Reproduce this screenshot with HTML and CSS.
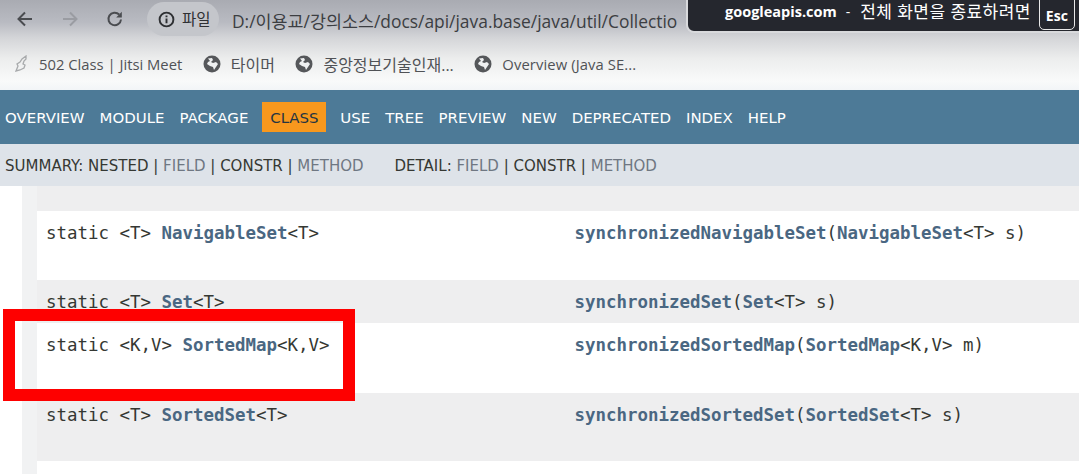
FILE: index.html
```html
<!DOCTYPE html>
<html lang="ko">
<head>
<meta charset="utf-8">
<title>Collections</title>
<link rel="stylesheet" href="styles.css">
</head>
<body>
<div class="chrome">
  <div class="toolbar">
    <svg class="tool" width="20" height="20" viewBox="0 0 20 20"><path d="M17 10H4M10 3.500 3.500 10l6.500 6.500" fill="none" stroke="#4a4c50" stroke-width="2"/></svg>
    <svg class="tool" width="20" height="20" viewBox="0 0 20 20"><path d="M3 10h13M10 3.500 16.500 10 10 16.500" fill="none" stroke="#9a9ca2" stroke-width="2"/></svg>
    <svg class="tool" width="20" height="20" viewBox="0 0 20 20"><path d="M16 10.500A6.300 6.300 0 1 1 14.200 5.500" fill="none" stroke="#4a4c50" stroke-width="2"/><path d="M16.800 2.800v5.600h-5.600z" fill="#4a4c50"/></svg>
    <div class="chip">
      <svg width="17" height="17" viewBox="0 0 16 16"><circle cx="8" cy="8" r="6.500" fill="none" stroke="#2e3033" stroke-width="1.800"/><path d="M8 7v4.500M8 4.300v1.500" stroke="#2e3033" stroke-width="1.800"/></svg>
      <span>파일</span>
    </div>
    <div class="url">D:/이용교/강의소스/docs/api/java.base/java/util/Collectio</div>
  </div>
  <div class="bookmarks">
    <div class="bm">
      <svg width="14" height="18" viewBox="0 0 14 18"><path d="M11 1 7 4 5 7 2 9l1 2-2 5 4-1 4-2 1-3-2-1 1-3 2-2z" fill="none" stroke="#a8aaac" stroke-width="1.300"/></svg>
      <span>502 Class | Jitsi Meet</span>
    </div>
    <div class="bm">
      <svg class="globe" width="18" height="18" viewBox="0 0 18 18"><circle cx="9" cy="9" r="8.500" fill="#55575a"/><path d="M5 3.500 9 3l1 2-2 2 2 1 3-1 2 2-2 3-2 3-1-3-3-1-3-2 1-2 2-1z" fill="#eef0f1"/></svg>
      <span class="cjk">타이머</span>
    </div>
    <div class="bm">
      <svg class="globe" width="18" height="18" viewBox="0 0 18 18"><circle cx="9" cy="9" r="8.500" fill="#55575a"/><path d="M5 3.500 9 3l1 2-2 2 2 1 3-1 2 2-2 3-2 3-1-3-3-1-3-2 1-2 2-1z" fill="#eef0f1"/></svg>
      <span class="cjk">중앙정보기술인재...</span>
    </div>
    <div class="bm">
      <svg class="globe" width="18" height="18" viewBox="0 0 18 18"><circle cx="9" cy="9" r="8.500" fill="#55575a"/><path d="M5 3.500 9 3l1 2-2 2 2 1 3-1 2 2-2 3-2 3-1-3-3-1-3-2 1-2 2-1z" fill="#eef0f1"/></svg>
      <span class="latin">Overview (Java SE...</span>
    </div>
  </div>
  <div class="fullscreen">
    <b class="host">googleapis.com</b>
    <span class="dash">-</span>
    <span class="msg">전체 화면을 종료하려면</span>
    <b class="esc">Esc</b>
  </div>
</div>
<nav class="topnav">
  <a>OVERVIEW</a><a>MODULE</a><a>PACKAGE</a><a class="active">CLASS</a><a>USE</a><a>TREE</a><a>PREVIEW</a><a>NEW</a><a>DEPRECATED</a><a>INDEX</a><a>HELP</a>
</nav>
<div class="subnav">
  <div>SUMMARY: NESTED | <span class="off">FIELD</span> | CONSTR | <span class="off">METHOD</span></div>
  <div>DETAIL: <span class="off">FIELD</span> | CONSTR | <span class="off">METHOD</span></div>
</div>
<main class="content">
  <div class="row gray r25"></div>
  <div class="row r69"><code class="c1">static &lt;T&gt; <b>NavigableSet</b>&lt;T&gt;</code><code class="c2"><b>synchronizedNavigableSet</b>(<b>NavigableSet</b>&lt;T&gt; s)</code></div>
  <div class="row gray r43"><code class="c1">static &lt;T&gt; <b>Set</b>&lt;T&gt;</code><code class="c2"><b>synchronizedSet</b>(<b>Set</b>&lt;T&gt; s)</code></div>
  <div class="row r70"><code class="c1">static &lt;K,V&gt; <b>SortedMap</b>&lt;K,V&gt;</code><code class="c2"><b>synchronizedSortedMap</b>(<b>SortedMap</b>&lt;K,V&gt; m)</code></div>
  <div class="row gray r68"><code class="c1">static &lt;T&gt; <b>SortedSet</b>&lt;T&gt;</code><code class="c2"><b>synchronizedSortedSet</b>(<b>SortedSet</b>&lt;T&gt; s)</code></div>
  <div class="row r13"></div>
</main>
<div class="redbox"></div>
</body>
</html>
```

FILE: styles.css
```css
* { box-sizing: border-box; }
html, body { margin: 0; padding: 0; }
body {
  width: 1079px;
  height: 474px;
  overflow: hidden;
  background: #fff;
  font-family: "Open Sans", "Noto Sans CJK KR", sans-serif;
  position: relative;
}
.chrome {
  height: 90px;
  background: linear-gradient(#a9abb2 0%, #b9bbc2 25%, #d4d5d8 42%, #eceded 65%, #f9fafa 90%, #f2f5f7 100%);
}
.toolbar {
  height: 38px;
  display: flex;
  align-items: center;
  padding-left: 15px;
  overflow: hidden;
  white-space: nowrap;
}
.tool { margin-right: 25px; flex: none; }
.tool:nth-child(3) { margin-right: 22px; }
.chip {
  display: flex;
  align-items: center;
  gap: 7px;
  height: 34px;
  width: 72px;
  padding-left: 11px;
  border-radius: 17px;
  background: #c4c6cb;
  font-size: 15.500px;
  color: #2e3033;
  flex: none;
}
.chip span { position: relative; top: -1px; }
.url {
  margin-left: 13px;
  font-size: 17.400px;
  color: #3c3e42;
  flex: none;
  position: relative;
  top: 1px;
}
.bookmarks {
  height: 52px;
  display: flex;
  align-items: center;
  padding: 0 0 0 15px;
  gap: 20.500px;
  font-size: 14.800px;
  color: #505256;
  position: relative;
}
.bm { display: flex; align-items: center; gap: 10px; white-space: nowrap; }
.bm svg { flex: none; }
.cjk { font-size: 16px; }
.latin { letter-spacing: 0.100px; }
.fullscreen {
  position: absolute;
  left: 686px;
  top: -4px;
  width: 400px;
  height: 37px;
  padding: 0 0 0 37px;
  display: flex;
  align-items: center;
  background: #25272e;
  border: 2px solid #d8d9dc;
  border-radius: 0 0 0 8px;
  color: #fff;
  font-size: 14px;
  white-space: nowrap;
}
.host { font-size: 14.500px; font-weight: 700; position: relative; top: -3px; }
.dash { margin: 0 10px 0 9px; position: relative; top: -3px; }
.msg { font-size: 17px; letter-spacing: 0.450px; position: relative; top: -4px; }
.esc {
  margin-left: 8px;
  width: 36px;
  height: 32px;
  display: flex;
  align-items: center;
  justify-content: center;
  border: 1px solid #e8e8e8;
  border-radius: 0 0 5px 5px;
  font-size: 14px;
  position: relative;
  top: -1px;
  padding-top: 3px;
}
.topnav {
  height: 54px;
  background: #4d7a97;
  display: flex;
  align-items: center;
  padding: 2px 0 0 5px;
  gap: 15px;
  font-family: "DejaVu Sans", sans-serif;
  font-size: 14.950px;
  color: #fff;
  white-space: nowrap;
}
.topnav .active {
  background: #f8981d;
  color: #253441;
  width: 64px;
  height: 30px;
  display: flex;
  align-items: center;
  justify-content: center;
  margin: -2px -1px 0 -1px;
  padding-top: 1px;
}
.subnav {
  height: 42px;
  background: #dee3e9;
  display: flex;
  align-items: center;
  padding: 2px 0 0 5px;
  gap: 31px;
  font-family: "DejaVu Sans", sans-serif;
  font-size: 15px;
  color: #353833;
  white-space: nowrap;
}
.off { color: #6f7782; }
.content {
  margin-left: 22px;
  padding-left: 15px;
  background: #f1f2f3;
  height: 288px;
}
.row {
  background: #fff;
  position: relative;
  display: flex;
  padding-top: 12px;
  white-space: nowrap;
}
.row.gray { background: #eeeeef; }
.r25 { height: 25px; background: #eeeeef; }
.r69 { height: 69px; }
.r43 { height: 43px; }
.r70 { height: 70px; }
.r68 { height: 68px; }
.r13 { height: 13px; }
code {
  font-family: "DejaVu Sans Mono", monospace;
  font-size: 17.450px;
  line-height: 20px;
  color: #353833;
  display: block;
}
code b { color: #4a6782; font-weight: 700; }
.c1 { width: 537.500px; padding-left: 9px; flex: none; }
.c2 { flex: none; }
.redbox {
  position: absolute;
  left: 3px;
  top: 309px;
  width: 352px;
  height: 92px;
  border: 12px solid #fe0000;
}
```
